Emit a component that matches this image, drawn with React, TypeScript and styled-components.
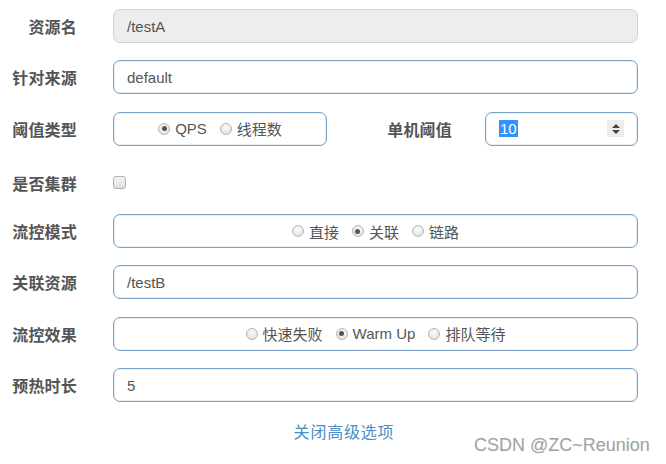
import React from "react";
import styled, { createGlobalStyle } from "styled-components";

const Global = createGlobalStyle`
  html, body { margin: 0; padding: 0; background: #fff; }
  body {
    font-family: "Liberation Sans", Arial, "Noto Sans CJK SC", sans-serif;
    width: 666px; height: 464px; overflow: hidden;
  }
`;

const Page = styled.div`
  position: relative;
  width: 666px;
  height: 464px;
  padding-top: 9px;
  box-sizing: border-box;
`;

const Form = styled.div`
  display: flex;
  flex-direction: column;
  gap: 17.3px;
  width: 638px;
`;

const Row = styled.div<{ $shift?: number }>`
  display: grid;
  grid-template-columns: 77px 525px;
  column-gap: 36px;
  height: 34px;
  align-items: center;
  box-sizing: border-box;
  padding-top: ${(p) => p.$shift ?? 0}px;
`;

const Label = styled.div`
  text-align: right;
  white-space: nowrap;
  font-family: "Noto Sans CJK SC", sans-serif;
  font-weight: 700;
  font-size: 16px;
  color: #555;
  letter-spacing: 0.2px;
`;

const Field = styled.div<{ $disabled?: boolean }>`
  height: 34px;
  box-sizing: border-box;
  border: 1px solid ${(p) => (p.$disabled ? "#d4d4d4" : "#7aa2c6")};
  background: ${(p) => (p.$disabled ? "#ededed" : "#fff")};
  border-radius: 7px;
  padding: 0 13px;
  display: flex;
  align-items: center;
  font-size: 15px;
  color: #555;
  box-shadow: ${(p) => (p.$disabled ? "none" : "inset 0 0 0 0.5px rgba(122,162,198,0.35)")};
`;

const RadioBox = styled(Field)<{ $w?: number }>`
  justify-content: center;
  padding: 0;
  ${(p) => (p.$w ? `width: ${p.$w}px;` : "")}
`;

const RadioItem = styled.label`
  display: inline-flex;
  align-items: center;
  margin: 0 6.5px;
  font-size: 15px;
  color: #555;
  font-family: "Liberation Sans", Arial, "Noto Sans CJK SC", sans-serif;
`;

const Dot = styled.span<{ $on?: boolean }>`
  width: 12px;
  height: 12px;
  border-radius: 50%;
  box-sizing: border-box;
  border: 1px solid #b5b5b5;
  background: radial-gradient(circle at 50% 35%, #fbfbfb 0%, #dcdcdc 100%);
  margin-right: 5px;
  position: relative;
  &::after {
    content: "";
    display: ${(p) => (p.$on ? "block" : "none")};
    position: absolute;
    left: 2.5px;
    top: 2.5px;
    width: 5px;
    height: 5px;
    border-radius: 50%;
    background: #555;
  }
`;

const Split = styled.div`
  display: flex;
  align-items: center;
`;

const SubLabel = styled(Label)`
  flex: 1;
  padding-right: 33px;
`;

const NumberField = styled(Field)`
  width: 153px;
  justify-content: space-between;
  padding: 0 13px 0 13px;
`;

const Selected = styled.span`
  background: #3390ff;
  color: #fff;
  line-height: 17px;
  padding: 0 1px;
`;

const Spinner = styled.span`
  width: 17px;
  height: 17px;
  background: #ececec;
  display: flex;
  flex-direction: column;
  align-items: center;
  justify-content: center;
  gap: 2px;
`;

const Arrow = styled.span<{ $up?: boolean }>`
  width: 0;
  height: 0;
  border-left: 4px solid transparent;
  border-right: 4px solid transparent;
  ${(p) => (p.$up ? "border-bottom: 4px solid #444;" : "border-top: 4px solid #444;")}
`;

const Check = styled.span`
  width: 13px;
  height: 13px;
  box-sizing: border-box;
  border: 1px solid #b0b0b0;
  border-radius: 3px;
  background: linear-gradient(#f6f6f6, #dedede);
`;

const LinkRow = styled.div`
  margin-top: 18px;
  padding-left: 22px;
  text-align: center;
  width: 666px;
  box-sizing: border-box;
`;

const Link = styled.a`
  font-family: "Noto Sans CJK SC", sans-serif;
  font-size: 16px;
  color: #4a8ec6;
  text-decoration: none;
  line-height: 22px;
  letter-spacing: 0.8px;
`;

const Watermark = styled.div`
  position: absolute;
  left: 474px;
  top: 435px;
  font-family: "Liberation Sans", Arial, sans-serif;
  font-size: 18px;
  color: #a3a3a3;
  text-shadow: 0 0 1px #fff, 0 0 1px rgba(0,0,0,0.15);
  white-space: nowrap;
`;

type Opt = { t: string; on?: boolean };

const Radios: React.FC<{ opts: Opt[] }> = ({ opts }) => (
  <>
    {opts.map((o) => (
      <RadioItem key={o.t}>
        <Dot $on={o.on} />
        {o.t}
      </RadioItem>
    ))}
  </>
);

export default function App() {
  return (
    <Page>
      <Global />
      <Form>
        <Row>
          <Label>资源名</Label>
          <Field $disabled>/testA</Field>
        </Row>
        <Row>
          <Label>针对来源</Label>
          <Field>default</Field>
        </Row>
        <Row>
          <Label>阈值类型</Label>
          <Split>
            <RadioBox $w={214}>
              <Radios opts={[{ t: "QPS", on: true }, { t: "线程数" }]} />
            </RadioBox>
            <SubLabel>单机阈值</SubLabel>
            <NumberField>
              <Selected>10</Selected>
              <Spinner>
                <Arrow $up />
                <Arrow />
              </Spinner>
            </NumberField>
          </Split>
        </Row>
        <Row $shift={6}>
          <Label>是否集群</Label>
          <Check />
        </Row>
        <Row>
          <Label>流控模式</Label>
          <RadioBox>
            <Radios opts={[{ t: "直接" }, { t: "关联", on: true }, { t: "链路" }]} />
          </RadioBox>
        </Row>
        <Row>
          <Label>关联资源</Label>
          <Field>/testB</Field>
        </Row>
        <Row>
          <Label>流控效果</Label>
          <RadioBox>
            <Radios opts={[{ t: "快速失败" }, { t: "Warm Up", on: true }, { t: "排队等待" }]} />
          </RadioBox>
        </Row>
        <Row>
          <Label>预热时长</Label>
          <Field>5</Field>
        </Row>
      </Form>
      <LinkRow>
        <Link href="#">关闭高级选项</Link>
      </LinkRow>
      <Watermark>CSDN @ZC~Reunion</Watermark>
    </Page>
  );
}
